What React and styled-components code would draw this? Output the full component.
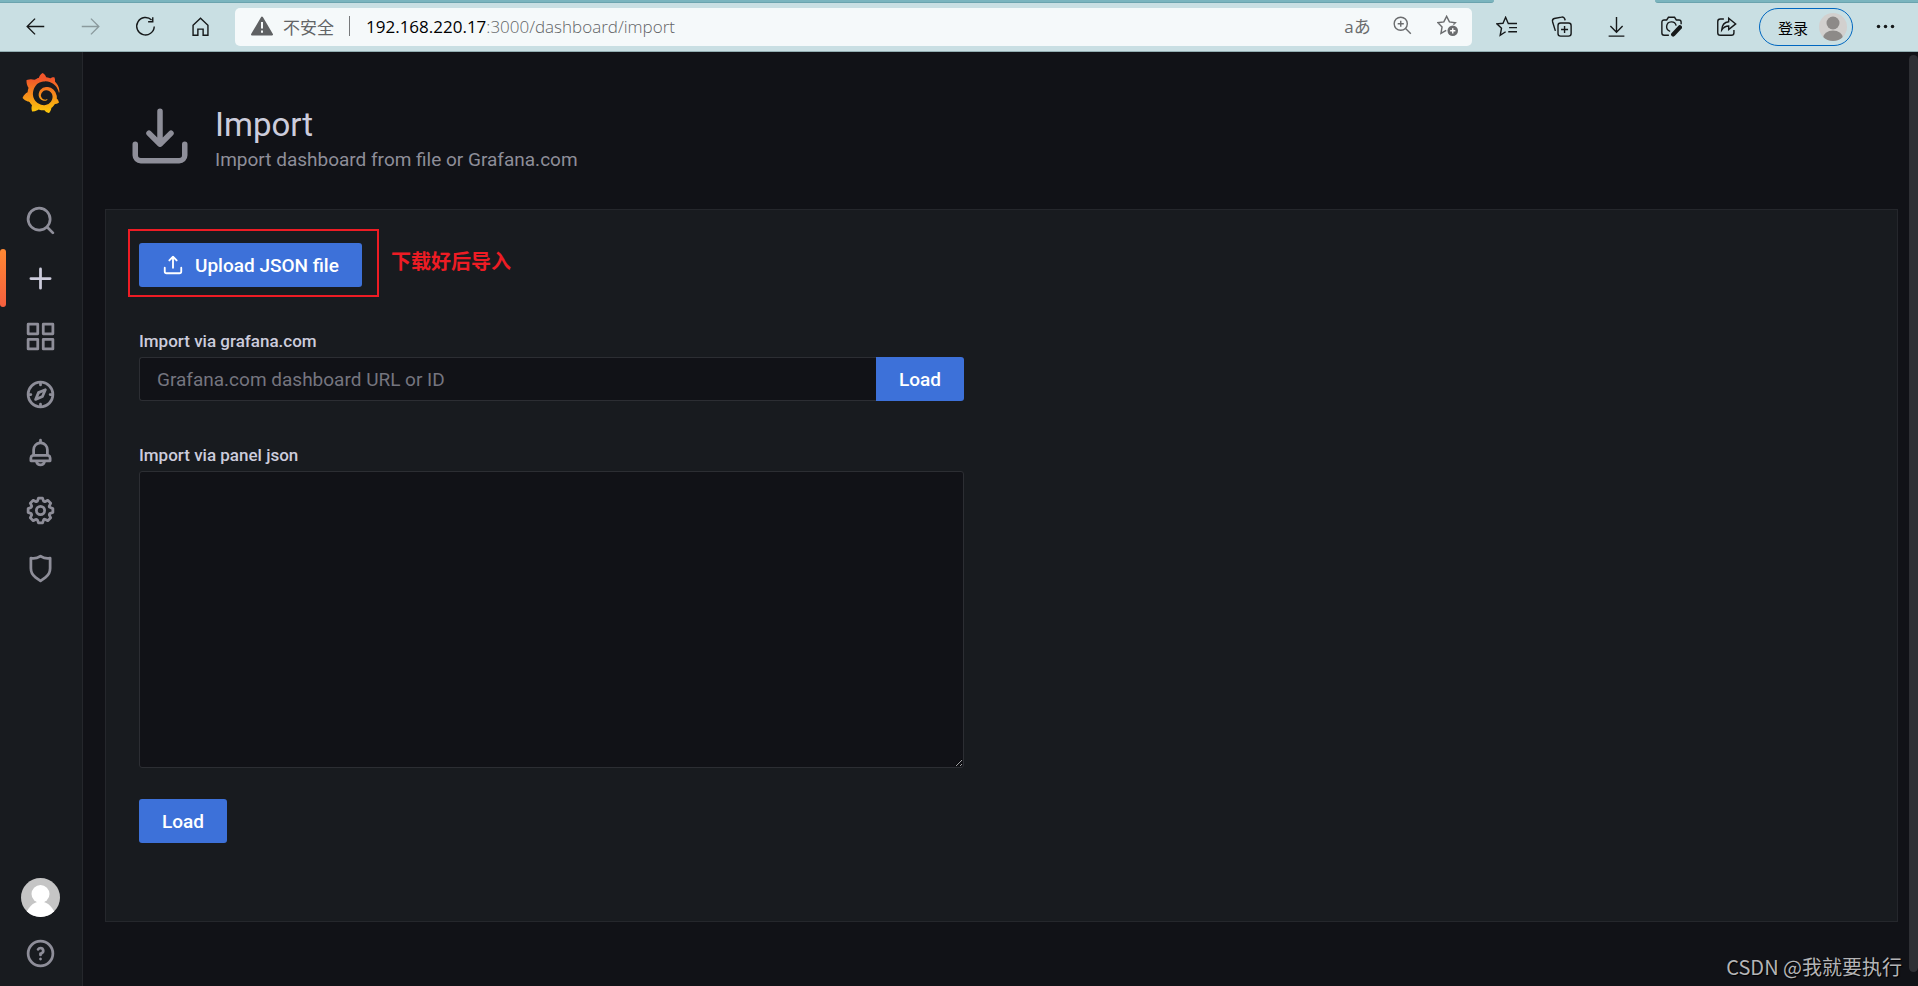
import React from "react";
import styled, { createGlobalStyle } from "styled-components";
import { SiGrafana } from "react-icons/si";

const icons = {
  search:
    "M21.71,20.29,18,16.61A9,9,0,1,0,16.61,18l3.68,3.68a1,1,0,0,0,1.42,0A1,1,0,0,0,21.71,20.29ZM11,18a7,7,0,1,1,7-7A7,7,0,0,1,11,18Z",
  plus:
    "M19,11H13V5a1,1,0,0,0-2,0v6H5a1,1,0,0,0,0,2h6v6a1,1,0,0,0,2,0V13h6a1,1,0,0,0,0-2Z",
  apps:
    "M10,13H3a1,1,0,0,0-1,1v7a1,1,0,0,0,1,1h7a1,1,0,0,0,1-1V14A1,1,0,0,0,10,13ZM9,20H4V15H9ZM21,2H14a1,1,0,0,0-1,1v7a1,1,0,0,0,1,1h7a1,1,0,0,0,1-1V3A1,1,0,0,0,21,2ZM20,9H15V4h5Zm1,4H14a1,1,0,0,0-1,1v7a1,1,0,0,0,1,1h7a1,1,0,0,0,1-1V14A1,1,0,0,0,21,13Zm-1,7H15V15h5ZM10,2H3A1,1,0,0,0,2,3v7a1,1,0,0,0,1,1h7a1,1,0,0,0,1-1V3A1,1,0,0,0,10,2ZM9,9H4V4H9Z",
  compass:
    "M12,2A10,10,0,1,0,22,12,10,10,0,0,0,12,2Zm1,17.93V19a1,1,0,0,0-2,0v.93A8,8,0,0,1,4.07,13H5a1,1,0,0,0,0-2H4.07A8,8,0,0,1,11,4.07V5a1,1,0,0,0,2,0V4.07A8,8,0,0,1,19.93,11H19a1,1,0,0,0,0,2h.93A8,8,0,0,1,13,19.93ZM15.14,7.55l-5,2.12a1,1,0,0,0-.52.52l-2.12,5a1,1,0,0,0,.21,1.1,1,1,0,0,0,.7.3.93.93,0,0,0,.4-.09l5-2.12a1,1,0,0,0,.52-.52l2.12-5a1,1,0,0,0-1.31-1.31Zm-2.49,5.1-2.28,1,1-2.28,2.28-1Z",
  bell:
    "M18,13.18V10a6,6,0,0,0-5-5.91V3a1,1,0,0,0-2,0V4.09A6,6,0,0,0,6,10v3.18A3,3,0,0,0,4,16v2a1,1,0,0,0,1,1H8.14a4,4,0,0,0,7.72,0H19a1,1,0,0,0,1-1V16A3,3,0,0,0,18,13.18ZM8,10a4,4,0,0,1,8,0v3H8Zm4,10a2,2,0,0,1-1.72-1h3.44A2,2,0,0,1,12,20Zm6-3H6V16a1,1,0,0,1,1-1H17a1,1,0,0,1,1,1Z",
  cog:
    "M21.32,9.55l-1.89-.63.89-1.78A1,1,0,0,0,20.13,6L18,3.87a1,1,0,0,0-1.15-.19l-1.78.89-.63-1.89A1,1,0,0,0,13.5,2h-3a1,1,0,0,0-.95.68L8.92,4.57,7.14,3.68A1,1,0,0,0,6,3.87L3.87,6a1,1,0,0,0-.19,1.15l.89,1.78-1.89.63A1,1,0,0,0,2,10.5v3a1,1,0,0,0,.68.95l1.89.63-.89,1.78A1,1,0,0,0,3.87,18L6,20.13a1,1,0,0,0,1.15.19l1.78-.89.63,1.89a1,1,0,0,0,.95.68h3a1,1,0,0,0,.95-.68l.63-1.89,1.78.89A1,1,0,0,0,18,20.13L20.13,18a1,1,0,0,0,.19-1.15l-.89-1.78,1.89-.63A1,1,0,0,0,22,13.5v-3A1,1,0,0,0,21.32,9.55ZM20,12.78l-1.2.4A2,2,0,0,0,17.64,16l.57,1.14-1.1,1.1L16,17.64a2,2,0,0,0-2.79,1.16l-.4,1.2H11.22l-.4-1.2A2,2,0,0,0,8,17.64l-1.14.57-1.1-1.1L6.36,16A2,2,0,0,0,5.2,13.18L4,12.78V11.22l1.2-.4A2,2,0,0,0,6.36,8L5.79,6.89l1.1-1.1L8,6.36A2,2,0,0,0,10.82,5.2l.4-1.2h1.56l.4,1.2A2,2,0,0,0,16,6.36l1.14-.57,1.1,1.1L17.64,8a2,2,0,0,0,1.16,2.79l1.2.4ZM12,8a4,4,0,1,0,4,4A4,4,0,0,0,12,8Zm0,6a2,2,0,1,1,2-2A2,2,0,0,1,12,14Z",
  shield:
    "M19.63,3.65a1,1,0,0,0-.84-.2,8,8,0,0,1-6.22-1.27,1,1,0,0,0-1.14,0A8,8,0,0,1,5.21,3.45a1,1,0,0,0-.84.2A1,1,0,0,0,4,4.43v7.45a9,9,0,0,0,3.77,7.33l3.65,2.6a1,1,0,0,0,1.16,0l3.65-2.6A9,9,0,0,0,20,11.88V4.43A1,1,0,0,0,19.63,3.65ZM18,11.88a7,7,0,0,1-2.93,5.7L12,19.77,8.93,17.58A7,7,0,0,1,6,11.88V5.58a10,10,0,0,0,6-1.39,10,10,0,0,0,6,1.39Z",
  help:
    "M11.29,15.29a1.58,1.58,0,0,0-.12.15.76.76,0,0,0-.09.18.64.64,0,0,0-.06.18,1.36,1.36,0,0,0,0,.2.84.84,0,0,0,.08.38.9.9,0,0,0,.54.54.94.94,0,0,0,.76,0,.9.9,0,0,0,.54-.54A1,1,0,0,0,13,16a1,1,0,0,0-.29-.71A1,1,0,0,0,11.29,15.29ZM12,2A10,10,0,1,0,22,12,10,10,0,0,0,12,2Zm0,18a8,8,0,1,1,8-8A8,8,0,0,1,12,20ZM12,7A3,3,0,0,0,9.4,8.5a1,1,0,1,0,1.73,1A1,1,0,0,1,12,9a1,1,0,0,1,0,2,1,1,0,0,0-1,1v1a1,1,0,0,0,2,0v-.18A3,3,0,0,0,12,7Z",
  download:
    "M21,14a1,1,0,0,0-1,1v4a1,1,0,0,1-1,1H5a1,1,0,0,1-1-1V15a1,1,0,0,0-2,0v4a3,3,0,0,0,3,3H19a3,3,0,0,0,3-3V15A1,1,0,0,0,21,14Zm-9.71,1.71a1,1,0,0,0,.33.21.94.94,0,0,0,.76,0,1,1,0,0,0,.33-.21l4-4a1,1,0,0,0-1.42-1.42L13,12.59V3a1,1,0,0,0-2,0v9.59l-2.29-2.3a1,1,0,1,0-1.42,1.42Z",
  upload:
    "M8.71,7.71,11,5.41V15a1,1,0,0,0,2,0V5.41l2.29,2.3a1,1,0,0,0,1.42,0,1,1,0,0,0,0-1.42l-4-4a1,1,0,0,0-.33-.21,1,1,0,0,0-.76,0,1,1,0,0,0-.33.21l-4,4A1,1,0,1,0,8.71,7.71ZM21,14a1,1,0,0,0-1,1v4a1,1,0,0,1-1,1H5a1,1,0,0,1-1-1V15a1,1,0,0,0-2,0v4a3,3,0,0,0,3,3H19a3,3,0,0,0,3-3V15A1,1,0,0,0,21,14Z",
};

const menu = [
  { name: "search", label: "Search dashboards" },
  { name: "plus", label: "Create", active: true },
  { name: "apps", label: "Dashboards" },
  { name: "compass", label: "Explore" },
  { name: "bell", label: "Alerting" },
  { name: "cog", label: "Configuration" },
  { name: "shield", label: "Server Admin" },
];

const Icon = ({ name, size }) => (
  <svg width={size} height={size} viewBox="0 0 24 24" fill="currentColor" aria-hidden="true">
    <path d={icons[name]} />
  </svg>
);

const Line = ({ children }) => (
  <LineSvg viewBox="0 0 24 24" aria-hidden="true">
    {children}
  </LineSvg>
);

const BrowserBar = () => (
  <Browser>
    <TabStrip>
      <TabEdge $side="left" />
      <ActiveTab />
      <TabEdge $side="right" />
    </TabStrip>
    <Toolbar>
      <ToolButton aria-label="Back">
        <Line><path d="M22 12H2.5M11.5 3l-9 9 9 9" /></Line>
      </ToolButton>
      <ToolButton aria-label="Forward" $dim>
        <Line><path d="M2 12h19.500M12.500 3l9 9-9 9" /></Line>
      </ToolButton>
      <ToolButton aria-label="Refresh">
        <Line><path d="M19 4.500A10 10 0 1 0 22 12M20.300 1.500v5h-5.300" /></Line>
      </ToolButton>
      <ToolButton aria-label="Home">
        <Line><path d="M3.500 10.500L12 2.500l8.500 8V22h-5.500v-7H9v7H3.500z" /></Line>
      </ToolButton>
      <AddressBar>
        <svg width="22" height="20" viewBox="0 0 22 20" aria-hidden="true">
          <path d="M11 1.500L21 18.500H1z" fill="#5f6163" stroke="#5f6163" strokeWidth="2" strokeLinejoin="round" />
          <path d="M11 6v6.500M11 14.500v2.300" stroke="#f5f9fa" strokeWidth="2" />
        </svg>
        <Insecure>不安全</Insecure>
        <Divider />
        <Url>
          <b>192.168.220.17</b>:3000/dashboard/import
        </Url>
        <BarButton aria-label="Read aloud">aあ</BarButton>
        <BarButton aria-label="Zoom">
          <Line><circle cx="10" cy="10" r="7.500" /><path d="M15.500 15.500l6 6M10 6.500v7M6.500 10h7" /></Line>
        </BarButton>
        <BarButton aria-label="Add to favorites">
          <Line>
            <path d="M10.500 17.500L4.500 21l1.300-7.300L1 8.800l6.800-.9L11 1.500l3.200 6.400 6.800.9-2.200 2.200" />
            <circle cx="18" cy="18" r="6" fill="#6a6c6e" stroke="none" />
            <path d="M18 15v6M15 18h6" stroke="#fff" />
          </Line>
        </BarButton>
      </AddressBar>
      <ToolButton aria-label="Favorites">
        <Line><path d="M14 8.500L11 1.500 8 8.300 1 9l5.300 5L4.800 22l6.200-4M13.500 8.500H24M15 13.300h9M14 18h10" /></Line>
      </ToolButton>
      <ToolButton aria-label="Collections">
        <Line>
          <rect x="8" y="8" width="15" height="15" rx="3" />
          <path d="M15.500 11.500v8M11.500 15.500h8M5 17L1.800 6.500a3 3 0 0 1 2-3.600L12 1.300a3 3 0 0 1 3.700 2.200l.6 1.500" />
        </Line>
      </ToolButton>
      <ToolButton aria-label="Downloads">
        <Line><path d="M12 1v17M5 11.500l7 7 7-7M3 23h18" /></Line>
      </ToolButton>
      <ToolButton aria-label="Web capture">
        <Line>
          <path d="M9 22H3.500a2.500 2.500 0 0 1-2.500-2.500V7a2.500 2.500 0 0 1 2.500-2.500h3L8.500 1.500h7l2 3h3A2.500 2.500 0 0 1 23 7v2.500M10.500 17.500a5.500 5.500 0 1 1 6.800-6.500" />
          <path d="M14 21l7.500-8" strokeWidth="5" strokeLinecap="round" />
        </Line>
      </ToolButton>
      <ToolButton aria-label="Share">
        <Line>
          <path d="M9 3.500H5a3 3 0 0 0-3 3V19a3 3 0 0 0 3 3h12.500a3 3 0 0 0 3-3v-3" />
          <path d="M14.500 2.500l8 6.500-8 6.500v-4c-4 0-6 1.500-8 4.500.3-5.500 3-9 8-9.500z" />
        </Line>
      </ToolButton>
      <Login>
        登录
        <svg width="28" height="28" viewBox="0 0 28 28" aria-hidden="true">
          <clipPath id="face"><circle cx="14" cy="14" r="14" /></clipPath>
          <g clipPath="url(#face)">
            <rect width="28" height="28" fill="#d2d0ce" />
            <circle cx="14" cy="10" r="6.500" fill="#8d8a88" />
            <ellipse cx="14" cy="25" rx="10" ry="7.500" fill="#8d8a88" />
          </g>
        </svg>
      </Login>
      <ToolButton aria-label="More">
        <Line>
          <g fill="currentColor" stroke="none">
            <circle cx="4" cy="12" r="2" />
            <circle cx="12" cy="12" r="2" />
            <circle cx="20" cy="12" r="2" />
          </g>
        </Line>
      </ToolButton>
    </Toolbar>
  </Browser>
);

const SideMenu = () => (
  <Sidebar>
    <svg width="0" height="0" aria-hidden="true">
      <linearGradient id="flame" x1="0" y1="0" x2="0" y2="1">
        <stop offset="0.150" stopColor="#f1562a" />
        <stop offset="1" stopColor="#fbca0a" />
      </linearGradient>
    </svg>
    <LogoLink href="#" aria-label="Home">
      <SiGrafana />
    </LogoLink>
    <Menu>
      {menu.map(({ name, label, active }) => (
        <MenuLink href="#" key={name} aria-label={label} $active={active}>
          <Icon name={name} size={33} />
        </MenuLink>
      ))}
    </Menu>
    <BottomLink href="#" aria-label="Profile">
      <svg width="39" height="39" viewBox="0 0 39 39" aria-hidden="true">
        <clipPath id="user"><circle cx="19.500" cy="19.500" r="19.500" /></clipPath>
        <g clipPath="url(#user)">
          <rect width="39" height="39" fill="#c5c5c5" />
          <circle cx="19.500" cy="16" r="9" fill="#fff" />
          <path d="M4 39c2-9 8-15.500 15.500-15.500S33 30 35 39z" fill="#fff" />
        </g>
      </svg>
    </BottomLink>
    <BottomLink href="#" aria-label="Help">
      <Icon name="help" size={33} />
    </BottomLink>
  </Sidebar>
);

const App = () => (
  <Screen>
    <GlobalStyle />
    <BrowserBar />
    <Page>
      <SideMenu />
      <Main>
        <Header>
          <Icon name="download" size={66} />
          <div>
            <Title>Import</Title>
            <Subtitle>Import dashboard from file or Grafana.com</Subtitle>
          </div>
        </Header>
        <Panel>
          <UploadRow>
            <Highlight>
              <Button>
                <Icon name="upload" size={22} />
                Upload JSON file
              </Button>
            </Highlight>
            <Note>下载好后导入</Note>
          </UploadRow>
          <Field>
            <Label htmlFor="gcom">Import via grafana.com</Label>
            <InputRow>
              <Input id="gcom" placeholder="Grafana.com dashboard URL or ID" />
              <Button $attached>Load</Button>
            </InputRow>
          </Field>
          <Field>
            <Label htmlFor="json">Import via panel json</Label>
            <TextArea id="json" />
          </Field>
          <Button>Load</Button>
        </Panel>
      </Main>
      <ScrollTrack>
        <ScrollThumb />
      </ScrollTrack>
    </Page>
    <Watermark>CSDN @我就要执行</Watermark>
  </Screen>
);

export default App;

const GlobalStyle = createGlobalStyle`
  * {
    box-sizing: border-box;
  }
  body {
    margin: 0;
    background: #111217;
    font-family: Roboto, "Noto Sans CJK SC", sans-serif;
  }
  button, input, textarea {
    font-family: inherit;
  }
  svg {
    flex: none;
  }
`;

const Screen = styled.div`
  position: relative;
  display: flex;
  flex-direction: column;
  min-height: 100vh;
`;

const Browser = styled.header`
  background: #c9dfe3;
  border-bottom: 1px solid #93aeb2;
  font-family: "Open Sans", "Noto Sans CJK SC", sans-serif;
`;

const TabStrip = styled.div`
  display: flex;
  height: 3px;
`;

const TabEdge = styled.div`
  flex: ${({ $side }) => ($side === "left" ? "1494" : "263")};
  background: #7ab4be;
  border-bottom: 1px solid #6ba3ae;
  border-radius: ${({ $side }) => ($side === "left" ? "0 0 3px 0" : "0 0 0 3px")};
`;

const ActiveTab = styled.div`
  flex: 161;
`;

const Toolbar = styled.div`
  display: flex;
  align-items: center;
  height: 48px;
  padding: 0 5px 0 8px;
`;

const ToolButton = styled.button`
  display: flex;
  align-items: center;
  justify-content: center;
  width: 55px;
  height: 38px;
  padding: 0 0 2px;
  border: 0;
  background: none;
  color: ${({ $dim }) => ($dim ? "#8b9a9d" : "#16191a")};
`;

const LineSvg = styled.svg`
  width: 21px;
  height: 21px;
  fill: none;
  stroke: currentColor;
  stroke-width: 1.6;
`;

const AddressBar = styled.div`
  display: flex;
  flex: 1;
  align-items: center;
  height: 38px;
  margin: 0 7px;
  padding: 0 2px 2px 16px;
  border-radius: 5px;
  background: #f5f9fa;
  color: #626466;
`;

const Insecure = styled.span`
  margin-left: 10px;
  font-size: 17px;
`;

const Divider = styled.span`
  width: 1px;
  height: 20px;
  margin: 0 16px 0 15px;
  background: #77797b;
`;

const Url = styled.span`
  flex: 1;
  font-size: 17px;
  font-weight: 300;
  b {
    color: #000;
    font-weight: 400;
  }
`;

const BarButton = styled(ToolButton)`
  width: 45px;
  color: #6a6c6e;
  font-size: 17px;
`;

const Login = styled.button`
  display: flex;
  align-items: center;
  justify-content: space-between;
  width: 94px;
  height: 38px;
  margin: 0 5px;
  padding: 0 5px 0 18px;
  border: 1px solid #0067c0;
  border-radius: 19px;
  background: none;
  color: #000;
  font-size: 15px;
`;

const Page = styled.div`
  display: flex;
  flex: 1;
`;

const Sidebar = styled.nav`
  display: flex;
  flex-direction: column;
  width: 83px;
  padding: 0 1px 5px 0;
  background: #181b1f;
  border-right: 1px solid #25272c;
`;

const LogoLink = styled.a`
  display: flex;
  justify-content: center;
  padding-top: 21px;
  svg {
    width: 40px;
    height: 40px;
    fill: url(#flame);
  }
`;

const Menu = styled.div`
  flex: 1;
  padding-top: 78px;
`;

const MenuLink = styled.a`
  position: relative;
  display: flex;
  align-items: center;
  justify-content: center;
  height: 58px;
  color: ${({ $active }) => ($active ? "#ccccdc" : "#8e8e99")};
  &::before {
    content: "";
    display: ${({ $active }) => ($active ? "block" : "none")};
    position: absolute;
    left: 0;
    width: 6px;
    height: 58px;
    border-radius: 3px;
    background: linear-gradient(#ff8833, #f55f3e);
  }
`;

const BottomLink = styled(MenuLink)`
  height: 56px;
`;

const Main = styled.main`
  flex: 1;
  padding: 51px 11px 44px 22px;
`;

const Header = styled.div`
  display: flex;
  align-items: flex-start;
  gap: 22px;
  margin: 0 0 36px 22px;
  color: #8e8e99;
`;

const Title = styled.h1`
  margin: 0;
  color: #ccccdc;
  font-size: 33px;
  font-weight: 400;
  line-height: 44px;
`;

const Subtitle = styled.div`
  font-size: 19px;
  line-height: 26px;
`;

const Panel = styled.section`
  padding: 19px 33px 78px;
  border: 1px solid #25272c;
  background: #181b1f;
`;

const UploadRow = styled.div`
  display: flex;
  align-items: center;
  gap: 12px;
  margin: 0 0 34px -11px;
`;

const Highlight = styled.div`
  padding: 12px 15px 8px 9px;
  border: 2px solid #ed1c24;
`;

const Button = styled.button`
  display: flex;
  align-items: center;
  gap: 11px;
  height: 44px;
  padding: 0 23px;
  border: 0;
  border-radius: ${({ $attached }) => ($attached ? "0 3px 3px 0" : "3px")};
  background: #3d71d9;
  color: #fff;
  font-size: 19px;
  font-weight: 500;
`;

const Note = styled.span`
  padding-bottom: 5px;
  color: #ed1c24;
  font-size: 20px;
  font-weight: 700;
`;

const Field = styled.div`
  max-width: 825px;
  margin-bottom: 44px;
  &:last-of-type {
    margin-bottom: 31px;
  }
`;

const Label = styled.label`
  display: block;
  margin-bottom: 6px;
  color: #ccccdc;
  font-size: 17px;
  font-weight: 500;
  line-height: 20px;
`;

const InputRow = styled.div`
  display: flex;
`;

const Input = styled.input`
  flex: 1;
  min-width: 0;
  height: 44px;
  padding: 0 17px;
  border: 1px solid #2c2e33;
  border-right: 0;
  border-radius: 3px 0 0 3px;
  background: #111217;
  color: #ccccdc;
  font-size: 19px;
  &::placeholder {
    color: #75757f;
  }
`;

const TextArea = styled.textarea`
  display: block;
  width: 100%;
  height: 297px;
  padding: 6px 11px;
  border: 1px solid #2c2e33;
  border-radius: 3px;
  background: #111217;
  color: #ccccdc;
  font-size: 19px;
`;

const ScrollTrack = styled.div`
  display: flex;
  width: 9px;
  padding: 3px 0 14px;
`;

const ScrollThumb = styled.div`
  flex: 1;
  border-radius: 5px;
  background: #2e2f34;
`;

const Watermark = styled.div`
  position: absolute;
  right: 16px;
  bottom: 4px;
  color: #b4b4b6;
  font-family: "Noto Sans CJK SC", sans-serif;
  font-size: 20px;
  line-height: 30px;
  text-shadow: 1px 1px 1px #000;
`;
